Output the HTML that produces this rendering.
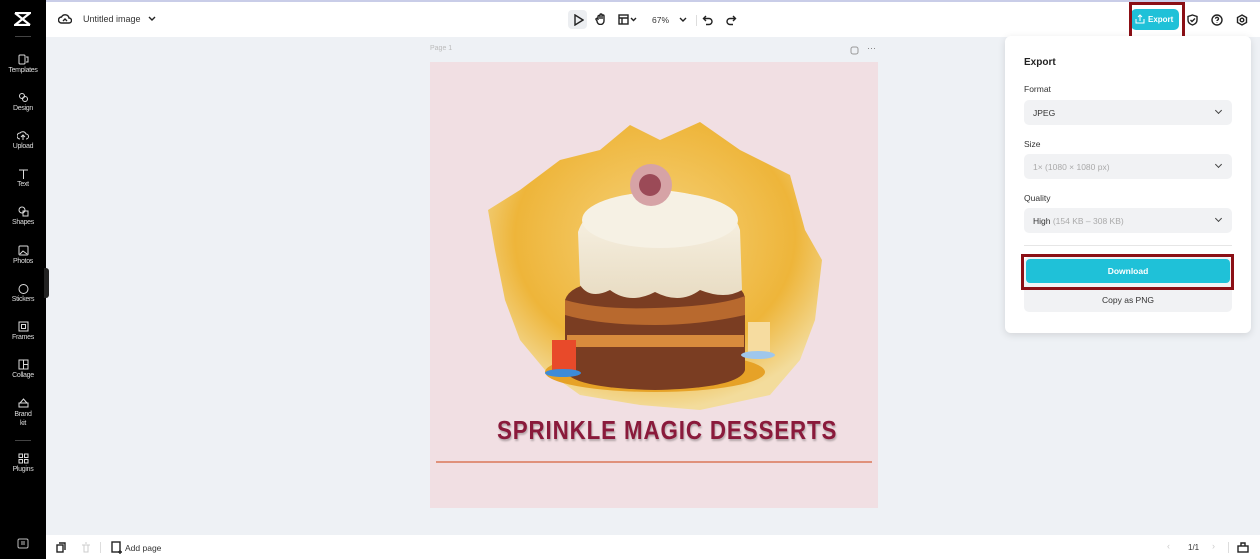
<!DOCTYPE html>
<html><head><meta charset="utf-8"><style>
*{margin:0;padding:0;box-sizing:border-box}
body{width:1260px;height:559px;overflow:hidden;font-family:"Liberation Sans",sans-serif;background:#eef1f5;position:relative}
.abs{position:absolute}
#side{left:0;top:0;width:46px;height:559px;background:#000}
.si{position:absolute;left:0;width:46px;text-align:center;color:#ddd;font-size:7px;letter-spacing:-0.3px}
.si svg{display:block;margin:0 auto 2px}
#top{left:46px;top:0;width:1214px;height:37px;background:#fff;border-top:2px solid #c9cde8}
#bot{left:46px;top:535px;width:1214px;height:24px;background:#fff}
.ic{stroke:#222;fill:none;stroke-width:1.4}
#panel{left:1005px;top:36px;width:246px;height:297px;background:#fff;border-radius:6px;box-shadow:0 2px 8px rgba(0,0,0,.12)}
.lbl{position:absolute;left:19px;font-size:8.5px;color:#333}
.sel{position:absolute;left:19px;width:208px;height:25px;background:#f1f2f4;border-radius:5px;font-size:8.5px;color:#333;padding:8px 9px}
.sel:after{content:"";position:absolute;right:11px;top:8px;width:4px;height:4px;border-right:1.3px solid #444;border-bottom:1.3px solid #444;transform:rotate(45deg)}
.g{color:#aaa}
</style></head><body>
<div id="side" class="abs">
 <svg class="abs" style="left:14px;top:12px" width="17" height="14" viewBox="0 0 17 14"><path d="M1 1h15L1 13h15M1 1l15 12" stroke="#fff" stroke-width="2.2" fill="none"/></svg>
 <div class="abs" style="left:15px;top:36px;width:16px;height:1px;background:#444"></div>
 <div class="si" style="top:54px"><svg width="11" height="11"><rect x="1" y="1" width="6" height="9" rx="1" stroke="#ddd" fill="none"/><path d="M8 3h2v5H8" stroke="#ddd" fill="none"/></svg>Templates</div>
 <div class="si" style="top:92px"><svg width="11" height="11"><circle cx="4" cy="4" r="2.5" stroke="#ddd" fill="none"/><circle cx="7" cy="7" r="2.5" stroke="#ddd" fill="none"/></svg>Design</div>
 <div class="si" style="top:130px"><svg width="12" height="11"><path d="M3 9a3 3 0 010-6 3.5 3.5 0 016 1 2.5 2.5 0 010 5M6 10V5M4 7l2-2 2 2" stroke="#ddd" fill="none"/></svg>Upload</div>
 <div class="si" style="top:168px"><svg width="11" height="11"><path d="M1 2h9M5.5 2v9" stroke="#ddd" fill="none"/></svg>Text</div>
 <div class="si" style="top:206px"><svg width="11" height="11"><circle cx="4" cy="4" r="3" stroke="#ddd" fill="none"/><rect x="5" y="5" width="5" height="5" stroke="#ddd" fill="none"/></svg>Shapes</div>
 <div class="si" style="top:245px"><svg width="11" height="11"><rect x="1" y="1" width="9" height="9" rx="1" stroke="#ddd" fill="none"/><path d="M2 9l3-3 4 3" stroke="#ddd" fill="none"/></svg>Photos</div>
 <div class="si" style="top:283px"><svg width="11" height="11"><circle cx="5.5" cy="6" r="4.5" stroke="#ddd" fill="none"/></svg>Stickers</div>
 <div class="si" style="top:321px"><svg width="11" height="11"><rect x="1" y="1" width="9" height="9" stroke="#ddd" fill="none"/><rect x="3.5" y="3.5" width="4" height="4" stroke="#ddd" fill="none"/></svg>Frames</div>
 <div class="si" style="top:359px"><svg width="11" height="11"><rect x="1" y="1" width="9" height="9" stroke="#ddd" fill="none"/><path d="M5.5 1v9M5.5 5.5h4.5" stroke="#ddd"/></svg>Collage</div>
 <div class="si" style="top:397px;line-height:9px"><svg width="11" height="11"><path d="M1 10h9V6H1zM2 6l3.5-4L9 6" stroke="#ddd" fill="none"/></svg>Brand<br>kit</div>
 <div class="abs" style="left:15px;top:440px;width:16px;height:1px;background:#444"></div>
 <div class="si" style="top:453px"><svg width="11" height="11"><rect x="1" y="1" width="3.5" height="3.5" stroke="#ddd" fill="none"/><rect x="6.5" y="1" width="3.5" height="3.5" stroke="#ddd" fill="none"/><rect x="1" y="6.5" width="3.5" height="3.5" stroke="#ddd" fill="none"/><rect x="6.5" y="6.5" width="3.5" height="3.5" stroke="#ddd" fill="none"/></svg>Plugins</div>
 <svg class="abs" style="left:17px;top:538px" width="12" height="11"><rect x="1" y="1" width="10" height="9" rx="1.5" stroke="#bbb" fill="none"/><path d="M4 4h4M4 6h4" stroke="#bbb"/></svg>
 <div class="abs" style="left:44px;top:268px;width:5px;height:30px;background:#222;border-radius:0 3px 3px 0"></div>
</div>
<div id="top" class="abs">
 <svg class="abs" style="left:12px;top:11px" width="14" height="12"><path d="M3.5 10a3 3 0 010-6 4 4 0 017.5 1 2.5 2.5 0 010 5z" class="ic"/><path d="M5 8l2-2 2 2" class="ic"/></svg>
 <div class="abs" style="left:37px;top:12px;font-size:9px;color:#333">Untitled image</div>
 <svg class="abs" style="left:102px;top:14px" width="8" height="6"><path d="M1 1l3 3 3-3" class="ic"/></svg>
 <div class="abs" style="left:522px;top:8px;width:19px;height:19px;background:#eceef1;border-radius:4px"></div>
 <svg class="abs" style="left:527px;top:12px" width="11" height="12"><path d="M2 1l8 5-8 5z" class="ic"/></svg>
 <svg class="abs" style="left:549px;top:11px" width="11" height="12"><path d="M3 7V3.5a1 1 0 012 0V6V2a1 1 0 012 0v4V3a1 1 0 012 0v5a3.5 3.5 0 01-7 0L1 6.5a1 1 0 012-.5z" class="ic" stroke-width="1.1"/></svg>
 <svg class="abs" style="left:572px;top:12px" width="20" height="11"><rect x="1" y="1" width="9" height="9" class="ic"/><path d="M1 4h9M4 4v6M13 4l2.5 2.5L18 4" class="ic"/></svg>
 <div class="abs" style="left:606px;top:13px;font-size:8.5px;color:#333">67%</div>
 <svg class="abs" style="left:633px;top:15px" width="8" height="6"><path d="M1 1l3 3 3-3" class="ic"/></svg>
 <div class="abs" style="left:650px;top:13px;width:1px;height:11px;background:#ddd"></div>
 <svg class="abs" style="left:656px;top:12px" width="12" height="12"><path d="M4 2L1.5 4.5 4 7M1.5 4.5H7a3 3 0 010 6H4" class="ic"/></svg>
 <svg class="abs" style="left:679px;top:12px" width="12" height="12"><path d="M8 2l2.5 2.5L8 7M10.5 4.5H5a3 3 0 000 6h3" class="ic" stroke="#ccc"/></svg>
 <div class="abs" style="left:1085px;top:7px;width:48px;height:21px;background:#1fc1d8;border-radius:5px;color:#fff;font-size:8px;font-weight:bold;padding:6px 0 0 17px">Export</div>
 <svg class="abs" style="left:1089px;top:12px" width="10" height="10"><path d="M1 5v4h8V5M5 7V1M3 3l2-2 2 2" stroke="#fff" fill="none"/></svg>
 <div class="abs" style="left:1083px;top:0;width:56px;height:37px;border:3px solid #8b0f15"></div>
 <svg class="abs" style="left:1141px;top:12px" width="11" height="12"><path d="M5.5 1L10 2.5V6c0 2.5-2 4.2-4.5 5C3 10.2 1 8.5 1 6V2.5z M3.5 6l1.5 1.5 3-3" class="ic"/></svg>
 <svg class="abs" style="left:1165px;top:12px" width="12" height="12"><circle cx="6" cy="6" r="5" class="ic"/><path d="M4.5 4.7a1.5 1.5 0 113 .3c0 1-1.5 1-1.5 2M6 8.5v.5" class="ic"/></svg>
 <svg class="abs" style="left:1190px;top:12px" width="12" height="12"><path d="M6 1l4.5 2.5v5L6 11 1.5 8.5v-5z" class="ic"/><circle cx="6" cy="6" r="1.8" class="ic"/></svg>
</div>
<div class="abs" style="left:430px;top:45px;font-size:7px;color:#bbb">Page 1</div>
<svg class="abs" style="left:850px;top:46px" width="9" height="9"><rect x="1" y="1" width="7" height="7" rx="2" stroke="#999" fill="none"/></svg>
<div class="abs" style="left:867px;top:43px;font-size:9px;color:#777">···</div>
<div class="abs" style="left:430px;top:62px;width:448px;height:446px;background:#f1dfe3;overflow:hidden">
 <svg width="448" height="446" viewBox="430 62 448 446">
  <defs>
   <radialGradient id="bg" cx="0.5" cy="0.4" r="0.6"><stop offset="0" stop-color="#f6d27a"/><stop offset="0.7" stop-color="#eeb53a"/><stop offset="1" stop-color="#f3dc9c"/></radialGradient>
   <linearGradient id="cr" x1="0" y1="0" x2="0" y2="1"><stop offset="0" stop-color="#fbf6ea"/><stop offset="1" stop-color="#e8dcc3"/></linearGradient>
  </defs>
  <path d="M520 190 L560 160 600 150 630 125 660 140 700 122 740 150 790 175 805 230 822 260 815 320 800 360 770 395 700 410 640 405 580 395 545 370 520 340 505 300 495 250 488 210z" fill="url(#bg)"/>
  <ellipse cx="655" cy="372" rx="110" ry="20" fill="#e6a227"/>
  <path d="M565 300 Q570 285 600 282 L720 282 Q745 285 745 300 L745 370 Q740 388 655 390 Q570 388 565 370z" fill="#7a3d22"/>
  <rect x="567" y="335" width="177" height="12" fill="#d88b3d"/>
  <path d="M565 300 Q600 310 655 308 Q720 306 745 296 L745 315 Q700 325 655 325 Q600 325 565 315z" fill="#b8692e"/>
  <path d="M578 232 Q590 195 660 190 Q730 195 740 230 L742 290 Q725 300 700 290 Q680 305 655 292 Q630 305 610 290 Q590 300 580 285z" fill="url(#cr)"/>
  <ellipse cx="660" cy="220" rx="78" ry="28" fill="#f6f1e4"/>
  <circle cx="651" cy="185" r="21" fill="#d6a3a6"/>
  <circle cx="650" cy="185" r="11" fill="#9b4a57"/>
  <rect x="552" y="340" width="24" height="32" fill="#e84a2a"/>
  <ellipse cx="563" cy="373" rx="18" ry="4" fill="#3d8bd8"/>
  <rect x="748" y="322" width="22" height="32" fill="#f6dca0"/>
  <ellipse cx="758" cy="355" rx="17" ry="4" fill="#9fc7ec"/>
 </svg>
 <div class="abs" style="left:67px;top:353px;font-family:'Liberation Sans',sans-serif;font-weight:bold;font-size:26px;color:#8a1a3b;letter-spacing:1px;text-shadow:1px 2px 2px rgba(0,0,0,.25);white-space:nowrap;transform:scaleX(0.86);transform-origin:0 0">SPRINKLE MAGIC DESSERTS</div>
 <div class="abs" style="left:6px;top:399px;width:436px;height:1.5px;background:#e0917b"></div>
</div>
<div id="panel" class="abs">
 <div class="lbl" style="top:21px;font-size:10px;font-weight:bold;color:#222">Export</div>
 <div class="lbl" style="top:48px">Format</div>
 <div class="sel" style="top:64px">JPEG</div>
 <div class="lbl" style="top:103px">Size</div>
 <div class="sel" style="top:118px"><span class="g">1× (1080 × 1080 px)</span></div>
 <div class="lbl" style="top:157px">Quality</div>
 <div class="sel" style="top:172px">High <span class="g">(154 KB – 308 KB)</span></div>
 <div class="abs" style="left:19px;top:209px;width:208px;height:1px;background:#e6e6e6"></div>
 <div class="abs" style="left:19px;top:221px;width:208px;height:55px;background:#f1f2f4;border-radius:5px"></div>
 <div class="abs" style="left:21px;top:223px;width:204px;height:24px;background:#1fc1d8;border-radius:4px;color:#fff;font-size:8.5px;font-weight:bold;text-align:center;line-height:24px">Download</div>
 <div class="abs" style="left:16px;top:218px;width:213px;height:36px;border:3px solid #8b0f15"></div>
 <div class="abs" style="left:19px;top:259px;width:208px;text-align:center;font-size:8.5px;color:#333">Copy as PNG</div>
</div>
<div id="bot" class="abs">
 <svg class="abs" style="left:10px;top:7px" width="10" height="11"><rect x="1" y="3" width="6" height="7" class="ic" stroke-width="1.1"/><path d="M3 1h6v7" class="ic" stroke-width="1.1"/></svg>
 <svg class="abs" style="left:35px;top:7px" width="10" height="11"><path d="M1 3h8M3 3v7h4V3M4 1h2" stroke="#ccc" fill="none"/></svg>
 <div class="abs" style="left:54px;top:7px;width:1px;height:11px;background:#ddd"></div>
 <svg class="abs" style="left:65px;top:6px" width="12" height="13"><rect x="1" y="1" width="8" height="10" class="ic" stroke-width="1.1"/><path d="M9 9v4M7 11h4" class="ic"/></svg>
 <div class="abs" style="left:79px;top:8px;font-size:8.5px;color:#333">Add page</div>
 <div class="abs" style="left:1121px;top:6px;font-size:9px;color:#ccc">‹</div>
 <div class="abs" style="left:1142px;top:8px;font-size:8px;color:#333">1/1</div>
 <div class="abs" style="left:1166px;top:6px;font-size:9px;color:#ccc">›</div>
 <div class="abs" style="left:1182px;top:7px;width:1px;height:11px;background:#ddd"></div>
 <svg class="abs" style="left:1191px;top:6px" width="12" height="12"><rect x="1" y="5" width="10" height="6" class="ic" stroke-width="1.1"/><path d="M4 5V2h4v3" class="ic" stroke-width="1.1"/></svg>
</div>
</body></html>
